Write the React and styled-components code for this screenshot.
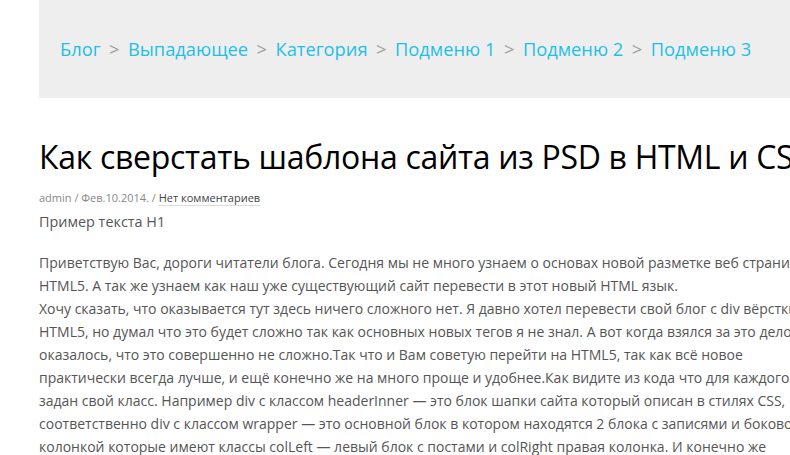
import React from "react"
import styled, { createGlobalStyle } from "styled-components"

const GlobalStyle = createGlobalStyle`
html, body {
    margin: 0;
    padding: 0;
    background: #fff;
    overflow: hidden;
}
body {
    font-family: "Open Sans", "Noto Sans", sans-serif;
}
`

const crumbs = ["Блог", "Выпадающее", "Категория", "Подменю 1", "Подменю 2", "Подменю 3"]

const lines = [
    "Приветствую Вас, дороги читатели блога. Сегодня мы не много узнаем о основах новой разметке веб страниц",
    "HTML5. А так же узнаем как наш уже существующий сайт перевести в этот новый HTML язык.",
    "Хочу сказать, что оказывается тут здесь ничего сложного нет. Я давно хотел перевести свой блог с div вёрстки на",
    "HTML5, но думал что это будет сложно так как основных новых тегов я не знал. А вот когда взялся за это дело",
    "оказалось, что это совершенно не сложно.Так что и Вам советую перейти на HTML5, так как всё новое",
    "практически всегда лучше, и ещё конечно же на много проще и удобнее.Как видите из кода что для каждого блока",
    "задан свой класс. Например div с классом headerInner — это блок шапки сайта который описан в стилях CSS,",
    "соответственно div с классом wrapper — это основной блок в котором находятся 2 блока с записями и боковой",
    "колонкой которые имеют классы colLeft — левый блок с постами и colRight правая колонка. И конечно же",
]

const App = () => {
    return (
        <>
            <GlobalStyle />
            <Page>
                <Breadcrumbs>
                    {crumbs.map((c, i) => (
                        <React.Fragment key={c}>
                            {i > 0 && <Sep>&gt;</Sep>}
                            <Crumb href="#">{c}</Crumb>
                        </React.Fragment>
                    ))}
                </Breadcrumbs>
                <Post>
                    <Title>Как сверстать шаблона сайта из PSD в HTML и CSS</Title>
                    <Meta>
                        admin / Фев.10.2014. / <MetaLink href="#">Нет комментариев</MetaLink>
                    </Meta>
                    <Subtitle>Пример текста H1</Subtitle>
                    <Body>
                        {lines.map((l, i) => (
                            <Line key={i}>{l}</Line>
                        ))}
                    </Body>
                </Post>
            </Page>
        </>
    )
}

const Page = styled.div`
width: 1100px;
margin-left: 39px;
`

const Breadcrumbs = styled.nav`
height: 98px;
background: #eeeeee;
display: flex;
align-items: center;
padding-left: 21px;
padding-bottom: 2px;
box-sizing: border-box;
font-size: 18.3px;
white-space: nowrap;
`

const Crumb = styled.a`
color: #1fbfe6;
text-decoration: none;
`

const Sep = styled.span`
color: #999;
margin: 0 8.5px;
`

const Post = styled.article`
padding-top: 35px;
`

const Title = styled.h1`
margin: 0;
font-size: 32px;
font-weight: 400;
letter-spacing: -0.3px;
line-height: 48px;
color: #000;
white-space: nowrap;
`

const Meta = styled.div`
margin-top: 9px;
font-size: 11px;
line-height: 16px;
color: #888;
`

const MetaLink = styled.a`
color: #444;
text-decoration: none;
border-bottom: 1px solid #ddd;
`

const Subtitle = styled.p`
margin: 6px 0 0;
font-size: 14.4px;
line-height: 20px;
color: #555;
`

const Body = styled.div`
margin-top: 19px;
font-size: 14px;
line-height: 23px;
color: #555;
`

const Line = styled.div`
white-space: nowrap;
`

export default App
